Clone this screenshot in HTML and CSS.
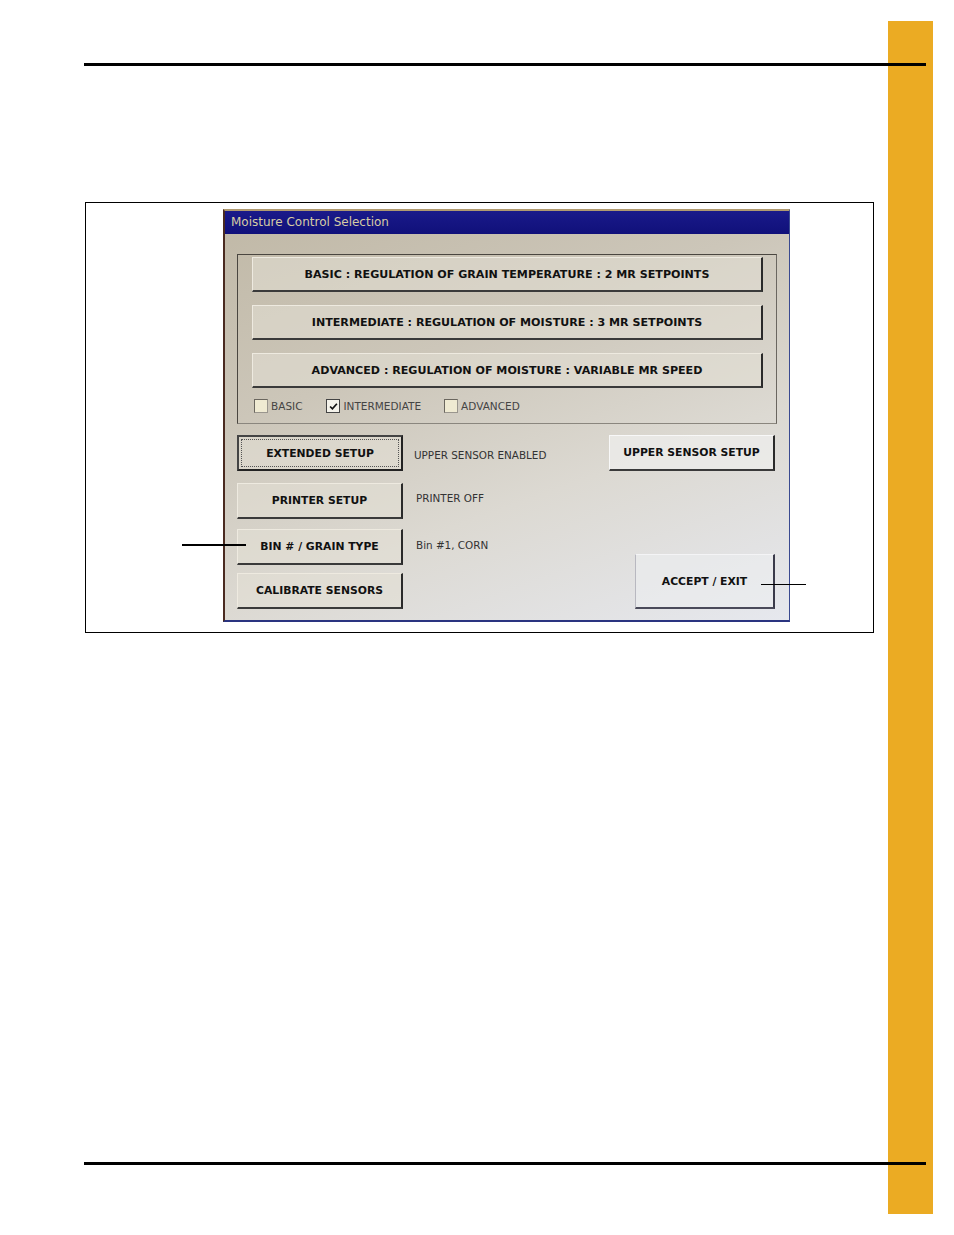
FILE: index.html
```html
<!DOCTYPE html>
<html>
<head>
<meta charset="utf-8">
<link rel="stylesheet" href="styles.css">
</head>
<body>
<div class="page">
  <div class="tab"></div>
  <div class="rule rule-top"></div>
  <div class="figure">
    <div class="screen">
      <div class="titlebar">Moisture Control Selection</div>
      <div class="group">
        <div class="btn wide">BASIC : REGULATION OF GRAIN TEMPERATURE : 2 MR SETPOINTS</div>
        <div class="btn wide">INTERMEDIATE : REGULATION OF MOISTURE : 3 MR SETPOINTS</div>
        <div class="btn wide">ADVANCED : REGULATION OF MOISTURE : VARIABLE MR SPEED</div>
        <div class="checks">
          <div class="check"><span class="box"></span>BASIC</div>
          <div class="check"><span class="box checked"><svg viewBox="0 0 13 13" width="11" height="11"><path d="M2.5 6.5 L5.2 9.2 L10.5 3.2" fill="none" stroke="#111" stroke-width="2"/></svg></span>INTERMEDIATE</div>
          <div class="check"><span class="box"></span>ADVANCED</div>
        </div>
      </div>
      <div class="lower">
        <div class="btn side focus"><span class="focus-ring">EXTENDED SETUP</span></div>
        <div class="label l1">UPPER SENSOR ENABLED</div>
        <div class="btn upper">UPPER SENSOR SETUP</div>
        <div class="btn side r2">PRINTER SETUP</div>
        <div class="label l2">PRINTER OFF</div>
        <div class="btn side r3">BIN # / GRAIN TYPE</div>
        <div class="label l3">Bin #1, CORN</div>
        <div class="btn side r4">CALIBRATE SENSORS</div>
        <div class="btn accept">ACCEPT / EXIT</div>
      </div>
    </div>
    <div class="callout callout-left"></div>
    <div class="callout callout-right"></div>
  </div>
  <div class="rule rule-bottom"></div>
</div>
</body>
</html>
```

FILE: styles.css
```css
html, body {
  margin: 0;
  padding: 0;
  background: #ffffff;
}
.page {
  position: relative;
  width: 954px;
  height: 1235px;
  overflow: hidden;
  font-family: "DejaVu Sans", "Liberation Sans", sans-serif;
}
.tab {
  position: absolute;
  left: 888px;
  top: 21px;
  width: 45px;
  height: 1193px;
  background: #ebab23;
}
.rule {
  position: relative;
  z-index: 1;
  height: 3px;
  width: 842px;
  margin-left: 84px;
  background: #000;
}
.rule-top {
  margin-top: 63px;
}
.rule-bottom {
  margin-top: 529px;
}
.figure {
  position: relative;
  box-sizing: border-box;
  margin-top: 136px;
  margin-left: 85px;
  width: 789px;
  height: 431px;
  border: 1px solid #000;
  padding: 6px 0 0 137px;
}
.screen {
  box-sizing: border-box;
  width: 567px;
  height: 413px;
  border-left: 2px solid #4a2a20;
  border-right: 1px solid #3a4a90;
  border-bottom: 2px solid #2a3480;
  border-top: 2px solid #b09a70;
  background: linear-gradient(160deg, #c0b8a6 0%, #ccc6b9 35%, #dcd9d2 65%, #e6e8ee 100%);
  overflow: hidden;
}
.titlebar {
  height: 23px;
  background: linear-gradient(180deg, #1a1a8a 0%, #10107a 100%);
  color: #d6cca4;
  font-size: 12px;
  line-height: 22px;
  padding-left: 6px;
}
.group {
  box-sizing: border-box;
  margin: 20px 12px 0 12px;
  height: 170px;
  border: 1px solid #4a4640;
  border-bottom-color: #8a867e;
  border-right-color: #6a6660;
  padding: 2px 13px 0 14px;
  display: flex;
  flex-direction: column;
  gap: 13px;
}
.btn {
  box-sizing: border-box;
  display: flex;
  align-items: center;
  justify-content: center;
  font-size: 10.8px;
  font-weight: bold;
  color: #111;
  background: rgba(228, 224, 214, 0.55);
  border-top: 1px solid #eeeae0;
  border-left: 1px solid #eeeae0;
  border-right: 2px solid #2a2a2a;
  border-bottom: 2px solid #3a3a3a;
  white-space: nowrap;
}
.wide {
  height: 35px;
  width: 511px;
  font-size: 11.1px;
}
.checks {
  display: flex;
  align-items: center;
  margin-top: -2px;
  font-size: 10.5px;
  color: #444;
}
.check {
  display: flex;
  align-items: center;
}
.check:nth-child(1) { margin-left: 2px; margin-right: 24px; }
.check:nth-child(2) { margin-right: 23px; }
.box {
  box-sizing: border-box;
  width: 14px;
  height: 14px;
  border: 1px solid #6a665e;
  border-right-color: #9a968e;
  border-bottom-color: #9a968e;
  background: #efead2;
  margin-right: 3px;
  display: flex;
  align-items: center;
  justify-content: center;
}
.box.checked {
  background: #f4f2ea;
  border-color: #444;
}
.lower {
  display: grid;
  grid-template-columns: 166px 1fr 166px;
  grid-template-rows: 36px 36px 36px 36px;
  row-gap: 11px;
  margin: 12px 14px 0 12px;
}
.side {
  grid-column: 1;
  width: 166px;
  height: 36px;
}
.r2 { grid-row: 2; margin-top: 0px; }
.r3 { grid-row: 3; margin-top: -1px; }
.r4 { grid-row: 4; margin-top: -4px; }
.focus {
  grid-row: 1;
  margin-top: -1px;
  border: 2px solid #222;
  border-top-color: #444;
  border-left-color: #444;
  padding: 2px;
}
.focus-ring {
  box-sizing: border-box;
  width: 100%;
  height: 100%;
  display: flex;
  align-items: center;
  justify-content: center;
  border: 1px dotted #555;
}
.label {
  grid-column: 2;
  align-self: center;
  font-size: 10.4px;
  color: #333;
  padding-left: 11px;
  white-space: nowrap;
}
.l1 { grid-row: 1; margin-top: 1px; }
.l2 { grid-row: 2; margin-top: -6px; padding-left: 13px; }
.l3 { grid-row: 3; margin-top: -6px; padding-left: 13px; }
.upper {
  grid-column: 3;
  grid-row: 1;
  width: 166px;
  height: 36px;
  margin-top: -1px;
  background: rgba(240, 240, 238, 0.7);
  border-top: 1px solid #f8f8f8;
  border-left: 1px solid #f8f8f8;
}
.accept {
  grid-column: 3;
  grid-row: 3 / 5;
  align-self: end;
  justify-self: end;
  width: 140px;
  height: 55px;
  margin-bottom: 4px;
  background: rgba(236, 238, 240, 0.6);
  border-top: 1px solid #f4f4f6;
  border-left: 1px solid #b8b8c0;
  border-right: 2px solid #3a3a4a;
  border-bottom: 2px solid #4a4a5a;
}
.callout {
  position: absolute;
  height: 2px;
  background: #000;
}
.callout-left {
  left: 96px;
  top: 341px;
  width: 64px;
}
.callout-right {
  left: 675px;
  top: 381px;
  width: 45px;
  height: 1px;
}
```
